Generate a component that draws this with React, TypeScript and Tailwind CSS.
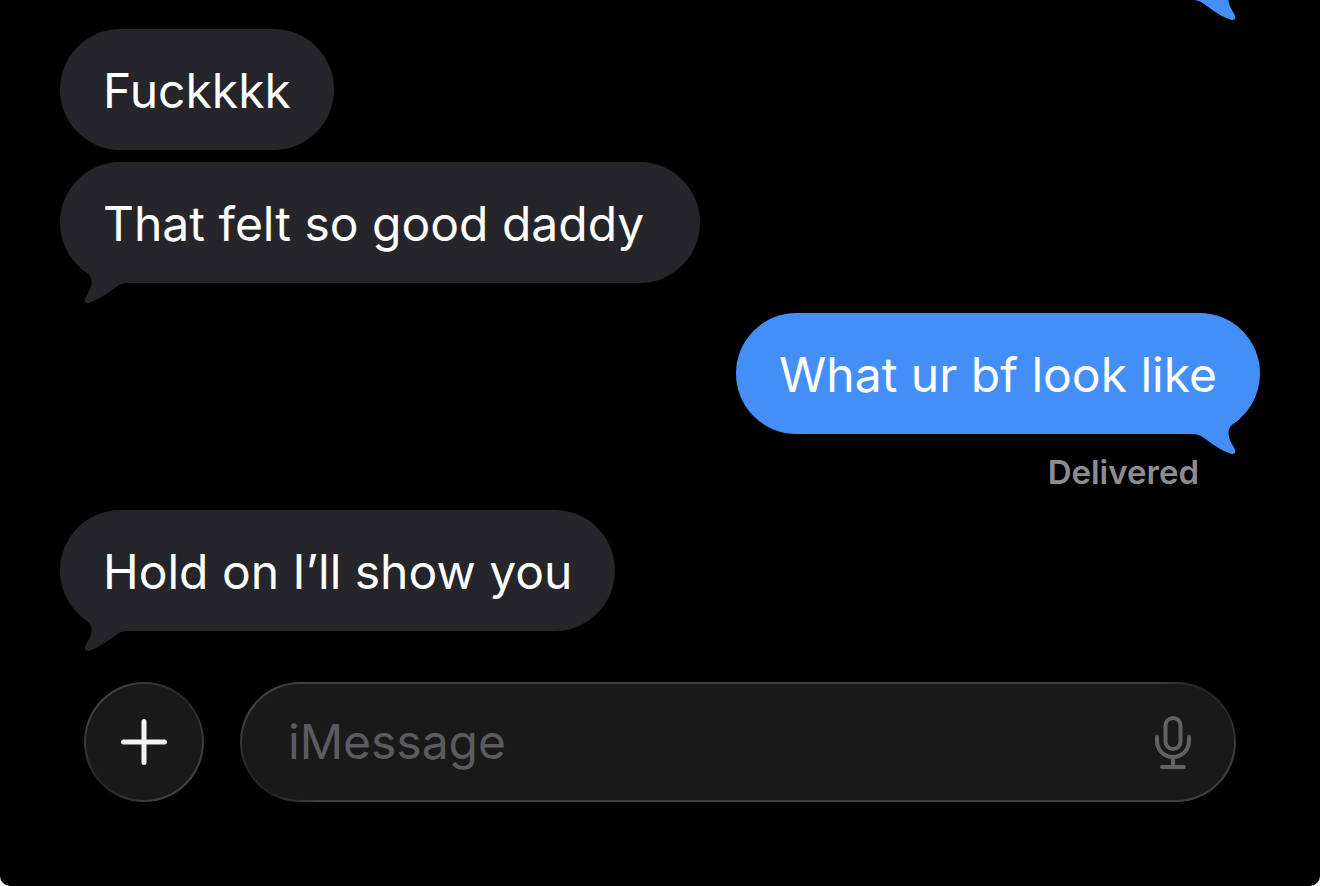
import { useState } from "react";
import clsx from "clsx";

type Message = {
  id: number;
  text: string;
  mine?: boolean;
  tail?: boolean;
  status?: string;
  spacing: string;
  padding?: string;
};

const messages: Message[] = [
  { id: 1, text: "Fuckkkk", spacing: "mt-[29px]" },
  { id: 2, text: "That felt so good daddy", tail: true, spacing: "mt-3", padding: "pl-[43px] pr-14" },
  { id: 3, text: "What ur bf look like", mine: true, tail: true, status: "Delivered", spacing: "mt-[30px]" },
  { id: 4, text: "Hold on I’ll show you", tail: true, spacing: "mt-5" },
];

function Tail({ mine }: { mine?: boolean }) {
  return (
    <svg
      aria-hidden="true"
      viewBox="0 0 80 42"
      className={clsx(
        "absolute -bottom-[21px] h-[42px] w-20",
        mine ? "right-0 -scale-x-100 fill-[#438ff7]" : "left-0 fill-[#26252a]"
      )}
    >
      <path d="M20 5.7 24 8.8C29 12.3 31.5 15 31.5 20.5 31.5 27 27 32 25.3 36 24 39.5 25.5 41.7 29 40.7 38 38 48 31 56 25 60 22 63 21 67 21V4H20Z" />
    </svg>
  );
}

function Bubble({ message }: { message: Message }) {
  const { text, mine, tail, status, spacing, padding = "px-[43px]" } = message;

  return (
    <li className={clsx("flex flex-col", mine ? "items-end" : "items-start", spacing)}>
      <div
        className={clsx(
          "relative rounded-[61px] pt-8 pb-[29px]",
          padding,
          mine ? "bg-[#438ff7]" : "bg-[#26252a]"
        )}
      >
        {tail && <Tail mine={mine} />}
        <p className="relative text-5xl leading-[60px] text-white">{text}</p>
      </div>
      {status && (
        <div className="mt-5 mr-[61px] text-[33px] leading-9 font-semibold text-[#8d8c92]">{status}</div>
      )}
    </li>
  );
}

export default function App() {
  const [draft, setDraft] = useState("");

  return (
    <div className="min-h-screen bg-white">
      <main className="flex min-h-screen flex-col overflow-hidden rounded-b-[10px] bg-black font-['Inter',sans-serif]">
        <div className="px-[60px]">
          {/* end of the previous sent bubble, scrolled off the top */}
          <div className="relative h-0">
            <Tail mine />
          </div>
          <ul className="flex flex-col">
            {messages.map((message) => (
              <Bubble key={message.id} message={message} />
            ))}
          </ul>
        </div>

        <form
          className="mt-[51px] flex items-center gap-9 px-[84px] pb-[84px]"
          onSubmit={(e) => e.preventDefault()}
        >
          <button
            type="button"
            aria-label="Add attachment"
            className="size-[120px] shrink-0 rounded-full bg-[linear-gradient(135deg,#4a4a4a,#3e3e3e_20%,#262626_50%,#3e3e3e_80%,#545454)] p-[2px]"
          >
            <span className="flex size-full items-center justify-center rounded-full bg-[#191919]">
              <svg viewBox="0 0 46 46" className="size-[46px] stroke-[#f2f2f2]" strokeWidth="5" strokeLinecap="round">
                <path d="M23 2.5v41M2.5 23h41" />
              </svg>
            </span>
          </button>

          <div className="h-[120px] min-w-0 flex-1 rounded-[60px] bg-[radial-gradient(circle_at_calc(100%_-_24px)_20px,#262626_20px,transparent_60px),radial-gradient(circle_at_24px_calc(100%_-_20px),#262626_20px,transparent_60px),linear-gradient(#404040,#404040)] p-[2px]">
            <div className="flex size-full items-center rounded-[58px] bg-[#191919] pr-[41px] pl-[46px]">
              <input
                type="text"
                aria-label="iMessage"
                placeholder="iMessage"
                value={draft}
                onChange={(e) => setDraft(e.target.value)}
                className="h-[60px] min-w-0 flex-1 bg-transparent text-5xl leading-[60px] text-white outline-none placeholder:text-[#5c5b60]"
              />
              <button type="button" aria-label="Dictate">
                <svg
                  viewBox="0 0 40 56"
                  className="h-14 w-10 fill-none stroke-[#626265]"
                  strokeWidth="4"
                  strokeLinecap="round"
                >
                  <rect x="12.5" y="4" width="15" height="31" rx="7.5" />
                  <path d="M4 23v4a16 16 0 0 0 32 0v-4M20 43v10M9 53h22" />
                </svg>
              </button>
            </div>
          </div>
        </form>
      </main>
    </div>
  );
}
